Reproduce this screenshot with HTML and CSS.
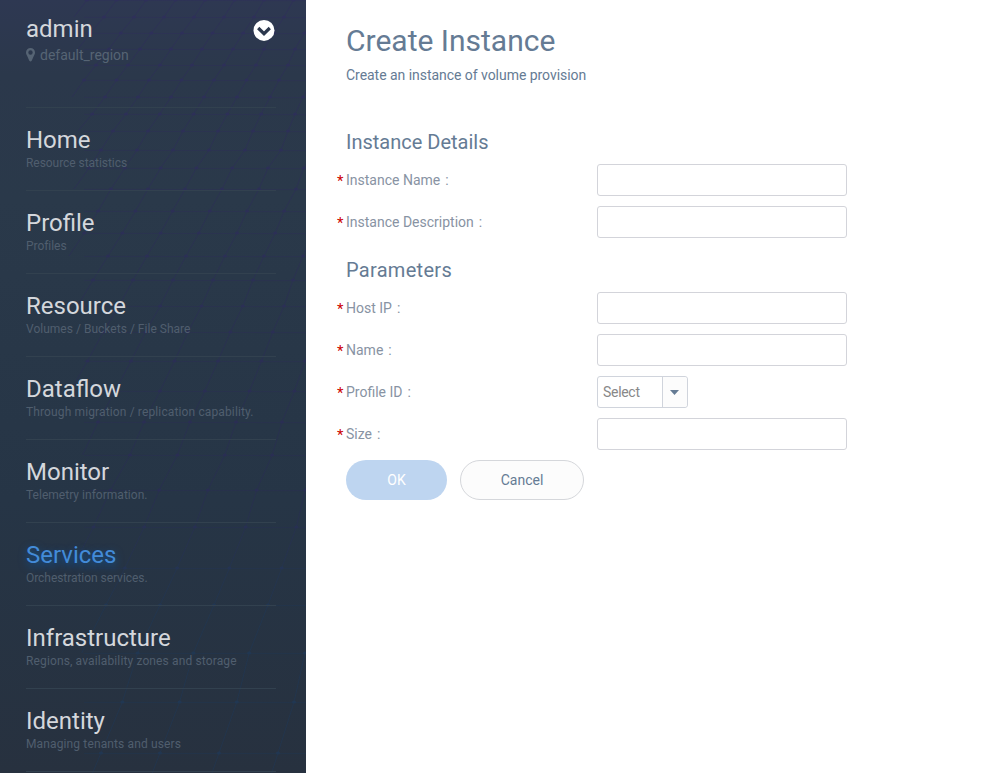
FILE: index.html
```html
<!DOCTYPE html>
<html lang="en">
<head>
<meta charset="utf-8">
<title>Create Instance</title>
<link rel="stylesheet" href="styles.css">
</head>
<body>
<div class="app">
  <aside class="sidebar">
    <svg class="mesh" width="306" height="773" aria-hidden="true">
      <defs><linearGradient id="tint" x1="0" y1="0" x2="0" y2="773" gradientUnits="userSpaceOnUse"><stop offset="0" stop-color="#302c60"/><stop offset=".65" stop-color="#2b2b59"/><stop offset=".8" stop-color="#1e3a5c"/><stop offset="1" stop-color="#1e3a5c"/></linearGradient></defs>
      <g id="mesh" stroke="url(#tint)" fill="url(#tint)"></g>
    </svg>
    <header class="account">
      <div>
        <div class="user">admin</div>
        <div class="region">
          <svg width="9" height="14" viewBox="0 0 9 14"><path fill-rule="evenodd" d="M4.5 0A4.5 4.5 0 0 0 0 4.5C0 6 .5 6.6 1.2 8L3.3 12.8Q4.5 14.3 5.7 12.8L7.8 8C8.5 6.6 9 6 9 4.500A4.500 4.500 0 0 0 4.500 0ZM4.500 2.300A2.200 2.200 0 1 1 4.500 6.700 2.200 2.200 0 0 1 4.500 2.300Z"/></svg>
          <span>default_region</span>
        </div>
      </div>
      <svg class="toggle" width="22" height="22" viewBox="0 0 22 22"><circle cx="11" cy="11.400" r="10.500" fill="#fff"/><path d="M5.200 9L11 14.700L16.800 9" fill="none" stroke="#2c384d" stroke-width="3.200"/></svg>
    </header>
    <nav>
      <a class="item"><span class="name">Home</span><span class="desc tight">Resource statistics</span></a>
      <a class="item"><span class="name">Profile</span><span class="desc tight">Profiles</span></a>
      <a class="item"><span class="name">Resource</span><span class="desc snug">Volumes / Buckets / File Share</span></a>
      <a class="item"><span class="name">Dataflow</span><span class="desc">Through migration / replication capability.</span></a>
      <a class="item"><span class="name">Monitor</span><span class="desc snug">Telemetry information.</span></a>
      <a class="item active"><span class="name">Services</span><span class="desc tight">Orchestration services.</span></a>
      <a class="item"><span class="name">Infrastructure</span><span class="desc">Regions, availability zones and storage</span></a>
      <a class="item"><span class="name">Identity</span><span class="desc">Managing tenants and users</span></a>
      <div class="item"></div>
    </nav>
  </aside>
  <main class="content">
    <h1>Create Instance</h1>
    <p class="intro">Create an instance of volume provision</p>
    <form>
      <h2>Instance Details</h2>
      <div class="row"><label><b>*</b>Instance Name<i>:</i></label><input type="text"></div>
      <div class="row"><label><b>*</b>Instance Description<i>:</i></label><input type="text"></div>
      <h2 class="second">Parameters</h2>
      <div class="row"><label><b>*</b>Host IP<i>:</i></label><input type="text"></div>
      <div class="row"><label><b>*</b>Name<i>:</i></label><input type="text"></div>
      <div class="row"><label><b>*</b>Profile ID<i>:</i></label>
        <div class="select"><span>Select</span><div class="arrow"><svg width="9" height="5" viewBox="0 0 9 5"><path d="M0 0H9L4.500 5Z"/></svg></div></div>
      </div>
      <div class="row"><label><b>*</b>Size<i>:</i></label><input type="text"></div>
      <div class="actions"><button type="button" class="ok" disabled>OK</button><button type="button" class="cancel">Cancel</button></div>
    </form>
  </main>
</div>
<script src="mesh.js"></script>
</body>
</html>
```
FILE: styles.css
```css
* { box-sizing: border-box; }
body { margin: 0; height: 773px; overflow: hidden; background: #fff; font: 14px/20px Roboto, "Liberation Sans", sans-serif; color: #657b94; }
.app { display: flex; height: 773px; }
.sidebar { position: relative; flex: 0 0 306px; height: 773px; overflow: hidden; padding: 0 30px 0 26px; background: linear-gradient(#2e3852 0, #2b384b 75px, #2a394a 200px, #263546 500px, #27313f 773px); }
.mesh { position: absolute; left: 0; top: 0; opacity: .65; }
.account { position: relative; display: flex; justify-content: space-between; height: 107px; padding-top: 14px; }
.user { font-size: 24px; line-height: 30px; color: #d4d7dc; }
.region { display: flex; align-items: center; gap: 5px; margin-top: 1px; font-size: 14px; line-height: 20px; color: #566474; }
.region svg { fill: #566474; }
.toggle { margin: 5px 1px 0 0; }
nav { position: relative; }
.item { display: block; height: 83px; padding-top: 17px; border-top: 1px solid #32414f; }
.item span { display: block; white-space: nowrap; }
.name { font-size: 24px; line-height: 30px; color: #d4d7dc; }
.desc { font-size: 12px; line-height: 16px; letter-spacing: .13px; color: #505e6e; }
.desc.snug { letter-spacing: .02px; }
.desc.tight { letter-spacing: -.05px; }
.active .name { color: #438bd8; text-shadow: 0 3px 8px rgba(8, 100, 192, .75); }
.content { flex: 1; padding: 21px 0 0 40px; }
h1, h2 { margin: 0; font-weight: 400; }
h1 { font-size: 30px; line-height: 40px; }
.intro { margin: 4px 0 46px; font-size: 14px; line-height: 20px; letter-spacing: -.04px; }
h2 { height: 33px; font-size: 20px; line-height: 22px; }
.second { margin-top: 11px; letter-spacing: .3px; }
.row { display: flex; height: 42px; }
label { position: relative; flex: 0 0 251px; line-height: 33px; color: #8893a3; }
label b { position: absolute; left: -9px; top: 1px; font-weight: 400; font-size: 15px; color: #c00; }
label i { margin-left: 5px; font-style: normal; }
input { width: 250px; height: 32px; border: 1px solid #d3d4da; border-radius: 3px; background: #fff; }
.select { display: flex; width: 91px; height: 32px; border: 1px solid #d0d4dc; border-radius: 3px; line-height: 31px; color: #888; }
.select span { flex: 1; padding-left: 5px; letter-spacing: -.3px; }
.arrow { width: 25px; display: flex; align-items: center; justify-content: center; padding-right: 1px; border-left: 1px solid #d0d4dc; background: #fcfcfc; border-radius: 0 3px 3px 0; }
.arrow svg { fill: #657b94; }
.actions { display: flex; gap: 13px; }
button { height: 40px; border-radius: 20px; font: 14px/38px Roboto, sans-serif; padding: 0; }
.ok { width: 101px; border: 0; background: #bed5f0; color: #fff; }
.cancel { width: 124px; border: 1px solid #d5d7db; background: #fcfcfc; color: #657b94; }
```
FILE: mesh.js
```js
// Perspective grid: [y, x of the reference column, column spacing]
const rows = [[0,205,29.5],[17,194,30],[33,182,30.6],[49,171,31],[65,160,32],[80,149,32.5],[97,138,33],[114,126,33.8],[131,113,35],[150,101,36],[168,89,35.8],[189,74,37],[211,61,37.2],[233,46,38.2],[256,30,39],[280,13,40],[306,-5,41.3],[332,-24,42.4],[361,-43,43.5],[391,-64,44.8],[422,-86,46],[455,-107,47.4],[490,-133,48.7],[527,-160,50.7],[568,-189,52.3],[605,-218,54],[653,-253,55.8],[702,-278,57.2],[753,-312,59],[810,-350,61]];
let out = "";
rows.forEach(([y, x, s], i) => {
  out += `<path opacity=".5" d="M84 ${y + .4}L306 ${y + .6}"/>`;
  for (let k = -6; k < 13; k++) {
    const px = x + k * s;
    const next = rows[i + 1];
    if (px < 84 || px > 320) continue;
    out += `<ellipse cx="${px}" cy="${y}" rx="2" ry="1.500" stroke="none"/>`;
    if (next) out += `<path opacity=".7" d="M${px} ${y}L${next[1] + k * next[2]} ${next[0]}"/>`;
  }
});
document.getElementById("mesh").innerHTML = out;
```
